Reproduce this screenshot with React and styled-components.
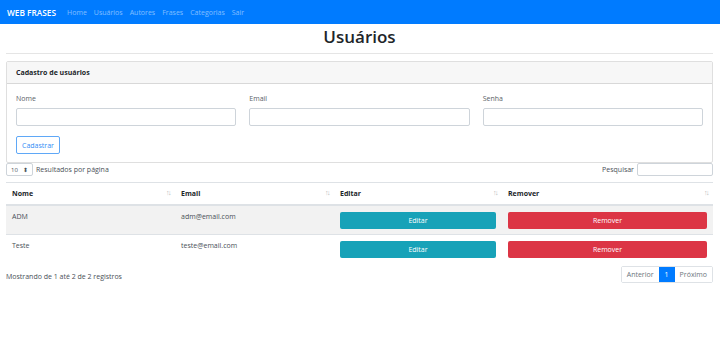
import React from 'react';
import styled, { createGlobalStyle } from 'styled-components';

const GlobalStyle = createGlobalStyle`
  * { box-sizing: border-box; }
  body {
    margin: 0;
    background: #fff;
    font-family: "Open Sans", "Noto Sans", sans-serif;
    font-size: 7.5px;
    color: #212529;
  }
`;

const Navbar = styled.nav`
  height: 24px;
  background: #007bff;
  display: flex;
  align-items: center;
  padding: 0 7px;
`;

const Brand = styled.span`
  color: #fff;
  font-size: 8.3px;
  font-weight: 600;
  margin-right: 11px;
`;

const NavLink = styled.a`
  color: rgba(255, 255, 255, 0.5);
  font-size: 7px;
  margin-right: 7px;
  text-decoration: none;
`;

const Container = styled.div`
  margin: 0 7px 0 6px;
`;

const Title = styled.h1`
  margin: 0;
  padding-top: 1px;
  text-align: center;
  font-size: 17px;
  font-weight: 600;
  line-height: 24px;
`;

const Rule = styled.hr`
  border: 0;
  border-top: 1px solid #e5e5e5;
  margin: 4px 0 7px;
`;

const Card = styled.div`
  border: 1px solid rgba(0, 0, 0, 0.125);
  border-radius: 2px;
`;

const CardHeader = styled.div`
  background: #f7f7f7;
  border-bottom: 1px solid rgba(0, 0, 0, 0.125);
  height: 22px;
  display: flex;
  align-items: center;
  padding: 0 9px;
  font-weight: 700;
  font-size: 7px;
`;

const CardBody = styled.div`
  padding: 10px 9px 8px;
`;

const FormGrid = styled.div`
  display: grid;
  grid-template-columns: repeat(3, 1fr);
  gap: 13px;
`;

const Field = styled.div`
  display: flex;
  flex-direction: column;
`;

const Label = styled.label`
  color: #5a6168;
  font-size: 7px;
  margin-bottom: 4px;
  line-height: 10px;
`;

const Input = styled.input`
  height: 18px;
  border: 1px solid #ced4da;
  border-radius: 2px;
  background: #fff;
`;

const OutlineButton = styled.button`
  margin-top: 10px;
  height: 18px;
  padding: 0 5px;
  border: 1px solid #5fa8f7;
  border-radius: 2px;
  background: #fff;
  color: #2f8cf5;
  font-family: inherit;
  font-size: 7px;
`;

const Toolbar = styled.div`
  display: flex;
  justify-content: space-between;
  align-items: center;
  height: 13px;
  margin-bottom: 6px;
`;

const ToolGroup = styled.div`
  display: flex;
  align-items: center;
  gap: 3px;
  color: #495057;
  font-size: 7px;
`;

const Select = styled.div`
  width: 27px;
  height: 13px;
  border: 1px solid #ced4da;
  border-radius: 2px;
  display: flex;
  align-items: center;
  justify-content: space-between;
  padding: 0 4px;
  font-size: 6px;
  color: #495057;
`;

const SearchBox = styled.input`
  width: 76px;
  height: 13px;
  border: 1px solid #ced4da;
  border-radius: 2px;
`;

const Table = styled.table`
  width: 100%;
  border-collapse: collapse;
  table-layout: fixed;
`;

const Th = styled.th`
  width: ${p => p.w}px;
  text-align: left;
  font-size: 7px;
  font-weight: 700;
  height: 22px;
  padding: 0 6px;
  border-top: 1px solid #dee2e6;
  border-bottom: 2px solid #dee2e6;
  position: relative;
`;

const SortIcon = styled.span`
  position: absolute;
  right: 5px;
  top: 5px;
  color: #b8b8b8;
  font-size: 7px;
  letter-spacing: -1.5px;
  font-weight: 400;
`;

const Row = styled.tr`
  background: ${p => (p.striped ? '#f2f2f2' : '#fff')};
  border-top: 1px solid #dee2e6;
`;

const Td = styled.td`
  height: 28px;
  padding: 6px 6px 5px;
  vertical-align: top;
  color: #495057;
  font-size: 7px;
  line-height: 10px;
`;

const ActionButton = styled.button`
  width: 100%;
  height: 17px;
  border: 0;
  border-radius: 2px;
  background: ${p => p.color};
  color: #fff;
  font-family: inherit;
  font-size: 7px;
`;

const Footer = styled.div`
  display: flex;
  justify-content: space-between;
  align-items: center;
  margin-top: 3px;
`;

const Info = styled.span`
  color: #495057;
  font-size: 7px;
  padding-top: 4px;
`;

const Pagination = styled.div`
  display: flex;
  height: 17px;
  border: 1px solid #dee2e6;
  border-radius: 2px;
`;

const PageItem = styled.span`
  display: flex;
  align-items: center;
  padding: 0 ${p => (p.active ? 6 : 5)}px;
  background: ${p => (p.active ? '#007bff' : '#fff')};
  color: ${p => (p.active ? '#fff' : '#6c757d')};
  font-size: 7px;
`;

const users = [
  { nome: 'ADM', email: 'adm@email.com' },
  { nome: 'Teste', email: 'teste@email.com' },
];

const columns = [
  { label: 'Nome', w: 169 },
  { label: 'Email', w: 159 },
  { label: 'Editar', w: 168 },
  { label: 'Remover', w: 211 },
];

export default function App() {
  return (
    <>
      <GlobalStyle />
      <Navbar>
        <Brand>WEB FRASES</Brand>
        {['Home', 'Usuários', 'Autores', 'Frases', 'Categorias', 'Sair'].map(l => (
          <NavLink key={l}>{l}</NavLink>
        ))}
      </Navbar>
      <Container>
        <Title>Usuários</Title>
        <Rule />
        <Card>
          <CardHeader>Cadastro de usuários</CardHeader>
          <CardBody>
            <FormGrid>
              {['Nome', 'Email', 'Senha'].map(f => (
                <Field key={f}>
                  <Label>{f}</Label>
                  <Input />
                </Field>
              ))}
            </FormGrid>
            <OutlineButton>Cadastrar</OutlineButton>
          </CardBody>
        </Card>
        <Toolbar>
          <ToolGroup>
            <Select>
              <span>10</span>
              <span>⬍</span>
            </Select>
            Resultados por página
          </ToolGroup>
          <ToolGroup>
            Pesquisar
            <SearchBox />
          </ToolGroup>
        </Toolbar>
        <Table>
          <thead>
            <tr>
              {columns.map(c => (
                <Th key={c.label} w={c.w}>
                  {c.label}
                  <SortIcon>↑↓</SortIcon>
                </Th>
              ))}
            </tr>
          </thead>
          <tbody>
            {users.map((u, i) => (
              <Row key={u.nome} striped={i % 2 === 0}>
                <Td>{u.nome}</Td>
                <Td>{u.email}</Td>
                <Td>
                  <ActionButton color="#17a2b8">Editar</ActionButton>
                </Td>
                <Td>
                  <ActionButton color="#dc3545">Remover</ActionButton>
                </Td>
              </Row>
            ))}
          </tbody>
        </Table>
        <Footer>
          <Info>Mostrando de 1 até 2 de 2 registros</Info>
          <Pagination>
            <PageItem>Anterior</PageItem>
            <PageItem active>1</PageItem>
            <PageItem>Próximo</PageItem>
          </Pagination>
        </Footer>
      </Container>
    </>
  );
}
